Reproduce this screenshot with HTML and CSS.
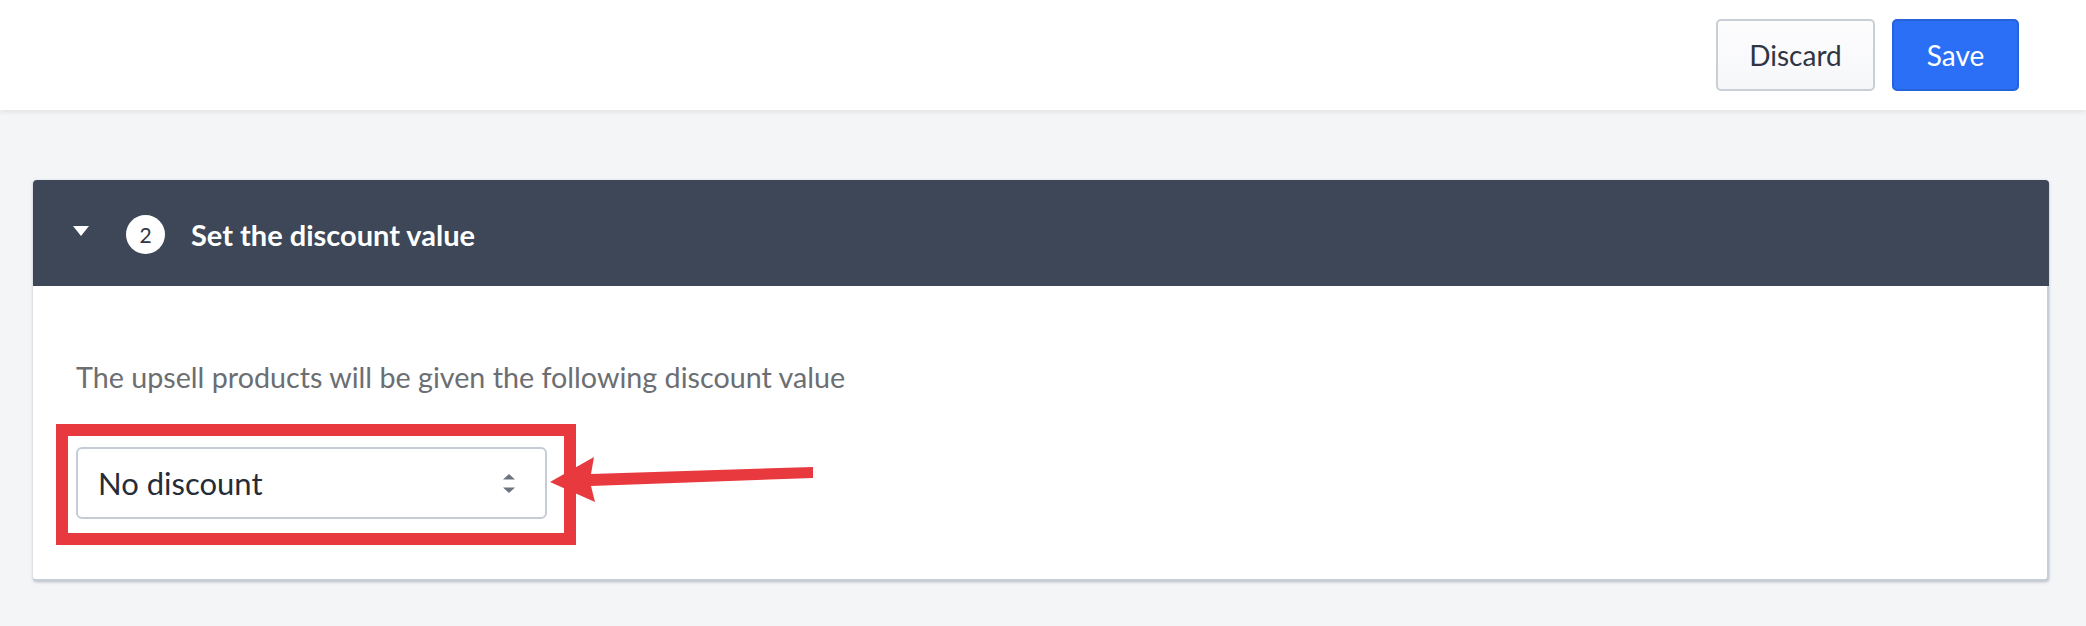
FILE: index.html
```html
<!DOCTYPE html>
<html>
<head>
<meta charset="utf-8">
<link rel="stylesheet" href="styles.css">
</head>
<body>
<header class="topbar">
  <button class="btn btn-light">Discard</button>
  <button class="btn btn-primary">Save</button>
</header>
<main class="main">
  <section class="panel">
    <div class="panel-head">
      <svg class="caret" width="16" height="10" viewBox="0 0 16 10"><polygon points="0,0 16,0 8,10" fill="#fff"/></svg>
      <span class="step">2</span>
      <h2 class="panel-title">Set the discount value</h2>
    </div>
    <div class="panel-body">
      <p class="hint">The upsell products will be given the following discount value</p>
      <div class="select-wrap">
        <div class="select">
          <span class="select-value">No discount</span>
          <svg class="select-arrows" width="12" height="19" viewBox="0 0 12 19"><polygon points="6,0 12,5.5 0,5.5" fill="#6b7280"/><polygon points="0,13.5 12,13.5 6,19" fill="#6b7280"/></svg>
        </div>
        <div class="highlight"></div>
        <svg class="pointer" width="280" height="60" viewBox="0 0 280 60"><polygon points="10,32 54,7 51,24 273,17 273,28 51,36 55,52" fill="#e8393f"/></svg>
      </div>
    </div>
  </section>
</main>
</body>
</html>
```

FILE: styles.css
```css
* { box-sizing: border-box; }
html, body { margin: 0; padding: 0; }
body {
  background: #f4f5f7;
  font-family: Lato, "Noto Sans", sans-serif;
  width: 2086px;
  height: 626px;
  overflow: hidden;
}
.topbar {
  height: 110px;
  background: #fff;
  display: flex;
  justify-content: flex-end;
  align-items: center;
  gap: 17px;
  padding-right: 67px;
  box-shadow: 0 2px 5px rgba(0,0,0,0.08);
  position: relative;
}
.btn {
  height: 72px;
  border-radius: 5px;
  font-family: Lato, "Noto Sans", sans-serif;
  font-size: 28px;
  padding: 0;
  margin-top: -1px;
}
.btn-light {
  width: 159px;
  background: linear-gradient(#fdfdfe, #f6f7f9);
  border: 2px solid #c9cfd7;
  color: #2f3542;
}
.btn-primary {
  width: 127px;
  background: #2b6ff6;
  border: 2px solid #2562dc;
  color: #fff;
}
.main {
  padding: 70px 37px 0 33px;
}
.panel {
  background: #fff;
  border-radius: 4px;
  box-shadow: 0 1px 3px rgba(60,70,90,0.35);
  border-right: 2px solid #c8ced6;
  border-bottom: 2px solid #c8ced6;
}
.panel-head {
  height: 106px;
  background: #3d4757;
  border-radius: 4px 4px 0 0;
  display: flex;
  align-items: center;
  padding-left: 40px;
  margin-right: -2px;
}
.caret { margin-top: -5px; }
.step {
  width: 39px;
  height: 39px;
  border-radius: 50%;
  background: #fff;
  color: #2f3542;
  margin-left: 37px;
  display: flex;
  align-items: center;
  justify-content: center;
  font-size: 21px;
  margin-top: 3px;
}
.panel-title {
  margin: 3px 0 0 26px;
  color: #fff;
  font-size: 29px;
  font-weight: 700;
}
.panel-body {
  padding: 73px 0 60px 43px;
}
.hint {
  margin: 0 0 52px;
  font-size: 28.7px;
  line-height: 36px;
  color: #6b6e72;
}
.select-wrap {
  position: relative;
  width: 471px;
}
.select {
  height: 72px;
  border: 2px solid #c5ccd5;
  border-radius: 6px;
  display: flex;
  align-items: center;
  justify-content: space-between;
  padding: 0 30px 0 20px;
  background: #fff;
}
.select-value {
  font-size: 31px;
  color: #262c37;
}
.select-arrows { margin-top: 1px; }
.highlight {
  position: absolute;
  left: -20px;
  top: -23px;
  width: 520px;
  height: 121px;
  border: 12px solid #e8393f;
}
.pointer {
  position: absolute;
  left: 464px;
  top: 3px;
}
```
